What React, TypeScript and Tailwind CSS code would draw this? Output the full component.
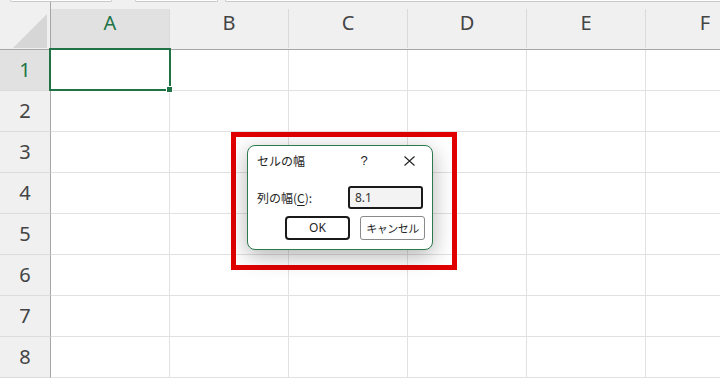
import React from "react";

const cols = ["A", "B", "C", "D", "E", "F"];
const rows = [1, 2, 3, 4, 5, 6, 7, 8];
const gridCols = "grid grid-cols-[51px_119px_119px_119px_119px_119px_119px]";

export default function App() {
  return (
    <div className="relative w-[720px] h-[381px] overflow-hidden bg-white font-['Noto_Sans','Liberation_Sans',sans-serif]">
      {/* top strip */}
      <div className="flex h-[2px] bg-[#f0f0f0]">
        <div className="ml-[10px] w-[102px] h-[2px] bg-white border-b border-x border-[#c8c8c8] rounded-b-[2px]" />
        <div className="ml-[23px] w-[83px] h-[2px] bg-white border-b border-x border-[#c8c8c8] rounded-b-[2px]" />
        <div className="ml-[7px] flex-1 h-[2px] bg-white border-b border-l border-[#c8c8c8] rounded-bl-[2px]" />
      </div>

      {/* header row */}
      <div className={`${gridCols} h-[48px] bg-[#f0f0f0] border-b border-[#a6a6a6]`}>
        <div className="border-r border-[#a6a6a6] flex justify-end items-end pr-[3px] pb-[1px]">
          <svg width="34" height="34" viewBox="0 0 34 34">
            <polygon points="34,0 34,34 0,34" fill="#d6d6d6" />
          </svg>
        </div>
        {cols.map((c, i) => (
          <div key={c} className="pt-[7px]">
            <div
              className={`h-[39px] border-r border-[#dadada] flex justify-center text-[20px] leading-[27px] ${
                i === 0 ? "bg-[#e1e1e1] text-[#217346]" : "text-[#444]"
              }`}
            >
              {c}
            </div>
          </div>
        ))}
      </div>

      {/* rows */}
      {rows.map((r) => (
        <div key={r} className={`${gridCols} h-[41px]`}>
          <div
            className={`border-r border-r-[#a6a6a6] border-b border-b-[#dcdcdc] flex items-center justify-center text-[20px] ${
              r === 1 ? "bg-[#e1e1e1] text-[#217346]" : "bg-[#f0f0f0] text-[#444]"
            }`}
          >
            {r}
          </div>
          {cols.map((c) => (
            <div key={c} className="border-r border-b border-[#e1e1e1]" />
          ))}
        </div>
      ))}

      {/* selection A1 */}
      <div className="absolute left-[49px] top-[48px] w-[122px] h-[43px] border-2 border-[#217346]" />
      <div className="absolute left-[166px] top-[86px] w-[7px] h-[7px] bg-white p-[1px]">
        <div className="w-[5px] h-[5px] bg-[#217346]" />
      </div>

      {/* red frame */}
      <div className="absolute left-[231px] top-[132px] w-[226px] h-[138px] border-[5px] border-[#e00000]" />

      {/* dialog */}
      <div className="absolute left-[247px] top-[145px] w-[186px] h-[105px] bg-white border border-[#2b7a4e] rounded-[8px] shadow-[0_6px_22px_rgba(0,0,0,0.3)] font-['Noto_Sans_CJK_JP','Noto_Sans',sans-serif] text-[#1f1f1f]">
        <div className="flex items-center h-[30px] pl-[9px] text-[12px]">
          <span className="w-[100px]">セルの幅</span>
          <span className="w-[14px] text-center font-['Liberation_Sans',sans-serif] text-[13px]">?</span>
          <span className="ml-[31px] w-[14px] flex justify-center">
            <svg width="11" height="10" viewBox="0 0 11 10">
              <path d="M0.5 0.5 L10.5 9.5 M10.5 0.5 L0.5 9.5" stroke="#222" strokeWidth="1.1" fill="none" />
            </svg>
          </span>
        </div>
        <div className="flex items-center mt-[10px] pl-[9px] h-[23px]">
          <span className="w-[91px] text-[12px]">
            列の幅(<span className="underline underline-offset-2">C</span>):
          </span>
          <div className="w-[75px] h-[23px] border-2 border-[#1a1a1a] rounded-[3px] bg-[#f3f3f3] flex items-center pl-[5px] text-[12px] text-[#333] font-['Noto_Sans',sans-serif]">
            8.1
          </div>
        </div>
        <div className="flex mt-[7px] pl-[37px] gap-[10px]">
          <div className="w-[65px] h-[24px] border-2 border-[#1a1a1a] rounded-[4px] flex items-center justify-center text-[12px] font-['Noto_Sans',sans-serif]">
            OK
          </div>
          <div className="w-[65px] h-[24px] border border-[#8a8a8a] rounded-[3px] flex items-center justify-center text-[11px] tracking-[-0.5px]">
            キャンセル
          </div>
        </div>
      </div>
    </div>
  );
}
